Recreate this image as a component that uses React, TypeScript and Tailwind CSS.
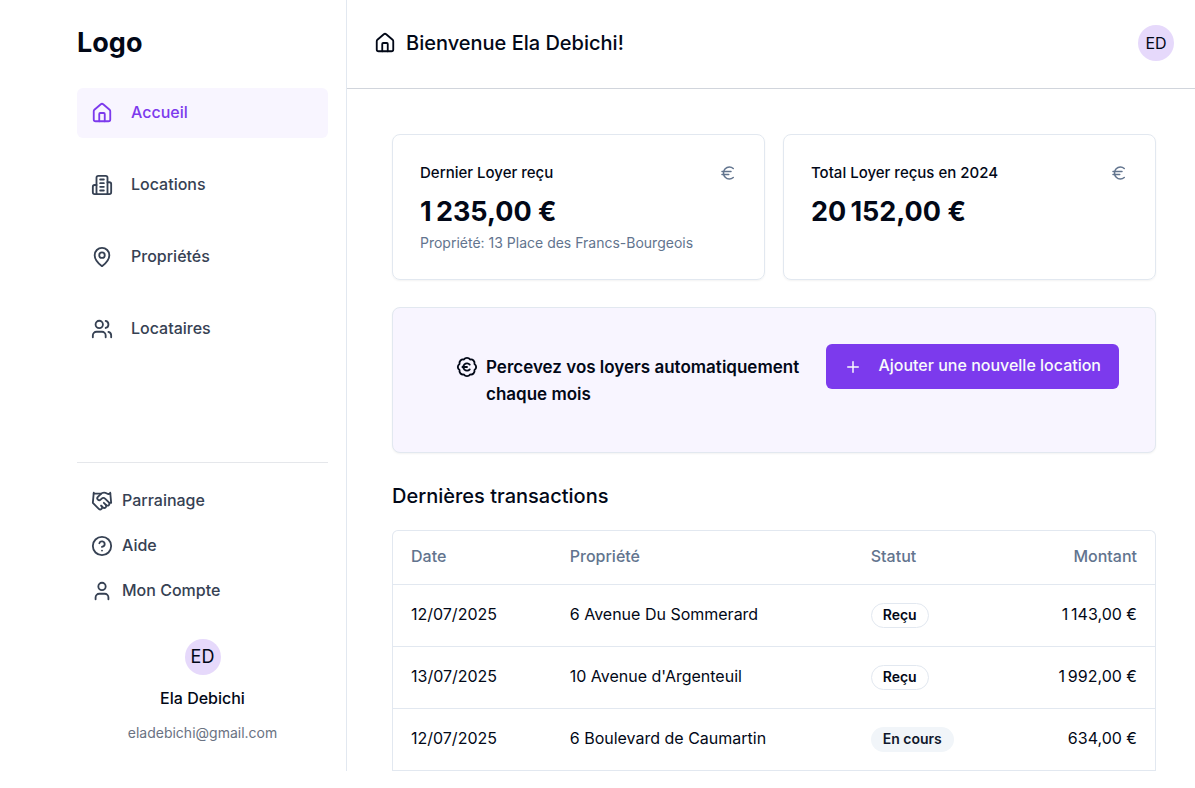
import type { ComponentType, ReactNode } from "react";
import { BadgeEuro, CircleHelp, Euro, Handshake, House, Plus, User, Users } from "lucide-react";

type IconProps = { size?: number };
type NavItem = { label: string; icon: ComponentType<IconProps>; active?: boolean };
type Transaction = { date: string; property: string; status: "Reçu" | "En cours"; amount: string };

function LineIcon({ size = 24, children }: { size?: number; children: ReactNode }) {
  return (
    <svg
      width={size}
      height={size}
      viewBox="0 0 24 24"
      fill="none"
      stroke="currentColor"
      strokeWidth={2}
      strokeLinecap="round"
      strokeLinejoin="round"
      aria-hidden="true"
    >
      {children}
    </svg>
  );
}

function BuildingIcon({ size }: IconProps) {
  return (
    <LineIcon size={size}>
      <path d="M6 22V4a2 2 0 0 1 2-2h8a2 2 0 0 1 2 2v18Z" />
      <path d="M6 12H4a2 2 0 0 0-2 2v6a2 2 0 0 0 2 2h2" />
      <path d="M18 9h2a2 2 0 0 1 2 2v9a2 2 0 0 1-2 2h-2" />
      <path d="M10 6h4" />
      <path d="M10 10h4" />
      <path d="M10 14h4" />
      <path d="M10 18h4" />
    </LineIcon>
  );
}

function PinIcon({ size }: IconProps) {
  return (
    <LineIcon size={size}>
      <path d="M20 10c0 6-8 12-8 12s-8-6-8-12a8 8 0 0 1 16 0Z" />
      <circle cx="12" cy="10" r="3" />
    </LineIcon>
  );
}

const mainNav: NavItem[] = [
  { label: "Accueil", icon: House, active: true },
  { label: "Locations", icon: BuildingIcon },
  { label: "Propriétés", icon: PinIcon },
  { label: "Locataires", icon: Users },
];

const secondaryNav: NavItem[] = [
  { label: "Parrainage", icon: Handshake },
  { label: "Aide", icon: CircleHelp },
  { label: "Mon Compte", icon: User },
];

const transactions: Transaction[] = [
  { date: "12/07/2025", property: "6 Avenue Du Sommerard", status: "Reçu", amount: "1\u202f143,00\u00a0€" },
  { date: "13/07/2025", property: "10 Avenue d'Argenteuil", status: "Reçu", amount: "1\u202f992,00\u00a0€" },
  { date: "12/07/2025", property: "6 Boulevard de Caumartin", status: "En cours", amount: "634,00\u00a0€" },
];

function Sidebar() {
  return (
    <aside className="flex w-[347px] shrink-0 flex-col border-r border-slate-200 pr-[18px] pl-[77px]">
      <p className="pt-[25px] text-[27px] leading-9 font-bold">Logo</p>
      <nav aria-label="Navigation principale" className="mt-[27px] flex flex-col gap-[22px]">
        {mainNav.map(({ label, icon: Icon, active }) => (
          <a
            key={label}
            href="#"
            aria-current={active ? "page" : undefined}
            className={
              active
                ? "flex h-[50px] items-center gap-[18px] rounded-md bg-[#f8f5ff] px-[14px] font-medium text-[#7c3aed]"
                : "flex h-[50px] items-center gap-[18px] rounded-md px-[14px] font-medium text-gray-700"
            }
          >
            <Icon size={22} />
            <span className="pb-0.5">{label}</span>
          </a>
        ))}
      </nav>
      <nav
        aria-label="Navigation secondaire"
        className="mt-[108px] flex flex-col gap-[9px] border-t border-gray-200 pt-5"
      >
        {secondaryNav.map(({ label, icon: Icon }) => (
          <a key={label} href="#" className="flex h-9 items-center gap-[9px] px-[14px] font-medium text-gray-700">
            <Icon size={22} />
            <span className="pb-0.5">{label}</span>
          </a>
        ))}
      </nav>
      <div className="mt-[30px] flex flex-col items-center">
        <Avatar large />
        <p className="mt-[11px] font-medium">Ela Debichi</p>
        <p className="mt-[13px] text-[14px] leading-5 text-gray-500">eladebichi@gmail.com</p>
      </div>
    </aside>
  );
}

function Avatar({ large = false }: { large?: boolean }) {
  return (
    <span
      className={
        large
          ? "flex size-9 items-center justify-center rounded-full bg-[#e6d9fb] text-[18px]"
          : "flex size-9 items-center justify-center rounded-full bg-[#e6d9fb] text-[16px]"
      }
    >
      ED
    </span>
  );
}

function StatCard({ title, value, note }: { title: string; value: string; note?: string }) {
  return (
    <section className="flex-1 rounded-lg border border-slate-200 px-[27px] pt-[27px] pb-[26px] shadow-xs">
      <div className="flex items-center justify-between">
        <h2 className="text-[15px] leading-[22px] font-medium">{title}</h2>
        <Euro size={18} className="text-slate-500" />
      </div>
      <p className="mt-2.5 text-[27px] leading-[35px] font-bold">{value}</p>
      {note && <p className="mt-1 text-[14px] leading-5 text-slate-500">{note}</p>}
    </section>
  );
}

export default function App() {
  return (
    <div className="flex bg-white pb-[17px] font-['Inter',sans-serif] text-[16px] leading-6 text-[#020817]">
      <Sidebar />
      <div className="min-w-0 flex-1">
        <header className="flex h-[89px] items-start justify-between border-b border-gray-300 pt-[25px] pr-[21px] pl-[27px]">
          <h1 className="flex h-9 items-center gap-2.5 text-[20px] leading-8 font-medium">
            <House size={22} />
            Bienvenue Ela Debichi!
          </h1>
          <Avatar />
        </header>
        <main className="pt-[45px] pr-[39px] pl-[45px]">
          <div className="flex gap-[18px]">
            <StatCard
              title="Dernier Loyer reçu"
              value={"1\u202f235,00\u00a0€"}
              note="Propriété: 13 Place des Francs-Bourgeois"
            />
            <StatCard title="Total Loyer reçus en 2024" value={"20\u202f152,00\u00a0€"} />
          </div>
          <section className="mt-[27px] flex min-h-[146px] items-start justify-between rounded-lg border border-slate-200 bg-[#f8f5ff] pt-9 pr-9 pl-[63px] shadow-xs">
            <div className="flex flex-1 items-start gap-2 pt-2.5">
              <BadgeEuro size={22} className="mt-0.5 shrink-0" />
              <p className="max-w-[340px] text-[17px] leading-[27px] font-semibold">
                Percevez vos loyers automatiquement chaque mois
              </p>
            </div>
            <button
              type="button"
              className="flex h-[45px] shrink-0 items-center gap-4 rounded-md bg-[#7c3aed] px-[18px] font-medium text-slate-50"
            >
              <Plus size={18} />
              <span className="pb-1">Ajouter une nouvelle location</span>
            </button>
          </section>
          <h2 className="mt-7 text-[20px] leading-[31px] font-medium">Dernières transactions</h2>
          <div className="mt-[18px] rounded-t-md border border-b-0 border-slate-200">
            <table className="w-full table-fixed text-left">
              <thead>
                <tr className="h-[53px] border-b border-slate-200 text-slate-500">
                  <th scope="col" className="w-5/24 px-[18px] pb-0.5 font-medium">Date</th>
                  <th scope="col" className="w-[39.5%] px-[18px] pb-0.5 font-medium">Propriété</th>
                  <th scope="col" className="px-[18px] pb-0.5 font-medium">Statut</th>
                  <th scope="col" className="px-[18px] pb-0.5 text-right font-medium">Montant</th>
                </tr>
              </thead>
              <tbody>
                {transactions.map((t, i) => (
                  <tr key={i} className="h-[62px] border-b border-slate-200">
                    <td className="px-[18px] pb-0.5">{t.date}</td>
                    <td className="px-[18px] pb-0.5">{t.property}</td>
                    <td className="px-[18px]">
                      <span
                        className={
                          t.status === "Reçu"
                            ? "inline-flex h-[25px] items-center rounded-full border border-slate-200 px-[11px] text-[14px] leading-[18px] font-semibold"
                            : "inline-flex h-[25px] items-center rounded-full border border-transparent bg-slate-100 px-[11px] text-[14px] leading-[18px] font-semibold text-slate-900"
                        }
                      >
                        {t.status}
                      </span>
                    </td>
                    <td className="px-[18px] pb-0.5 text-right">{t.amount}</td>
                  </tr>
                ))}
              </tbody>
            </table>
          </div>
        </main>
      </div>
    </div>
  );
}
